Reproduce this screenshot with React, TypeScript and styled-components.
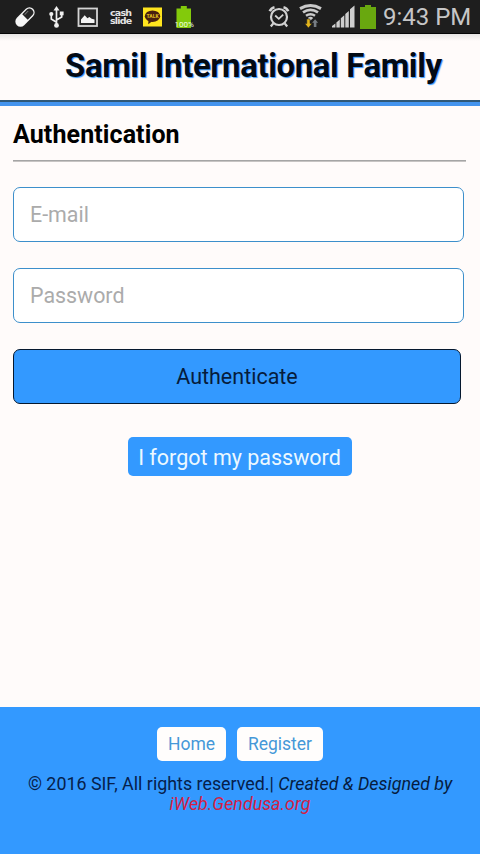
import React from "react";
import styled, { createGlobalStyle } from "styled-components";

const BLUE = "#3399ff";
const PAPER = "#fffbfa";

const GlobalStyle = createGlobalStyle`
  *, *::before, *::after { box-sizing: border-box; }
  html, body { margin: 0; padding: 0; }
  body { background: ${PAPER}; font-family: Roboto, sans-serif; color: #000; }
`;

const Screen = styled.div`
  display: flex;
  flex-direction: column;
  width: 480px;
  height: 854px;
  overflow: hidden;
  background: ${PAPER};
`;

const StatusBar = styled.div`
  display: flex;
  justify-content: space-between;
  flex: none;
  height: 34px;
  padding: 0 9px 0 14px;
  background: #1e1e1e;
  border-bottom: 1px solid #050505;
`;

const IconGroup = styled.div<{ $gap: number }>`
  display: flex;
  align-items: center;
  gap: ${(p) => p.$gap}px;
`;

const Glyph = styled.svg`
  display: block;
  flex: none;
`;

const CashSlide = styled.span`
  width: 21px;
  padding-top: 1px;
  font: 700 9.5px/8.5px "DejaVu Sans", sans-serif;
  letter-spacing: -0.8px;
  color: #e4e4e4;
`;

const Clock = styled.span`
  width: 88px;
  margin-left: 2px;
  font-size: 24px;
  line-height: 32px;
  letter-spacing: 0;
  white-space: nowrap;
  color: #c6c6c6;
`;

const Header = styled.header`
  flex: none;
  height: 72px;
  padding: 12px 0 0 65px;
  background: linear-gradient(#e6e4e3, ${PAPER} 7px);
  border-bottom: 4px solid #4494ee;
  box-shadow: inset 0 -2px 0 #2f5878;
`;

const Title = styled.h1`
  margin: 0;
  font-size: 33px;
  line-height: 40px;
  font-weight: 700;
  letter-spacing: -0.4px;
  white-space: nowrap;
  color: #030a14;
  text-shadow: 1px 1px 1px ${BLUE};
`;

const Main = styled.main`
  flex: 1;
  padding: 12px 14px 0 13px;
`;

const Heading = styled.h2`
  margin: 0 0 10px;
  height: 32px;
  font-size: 25px;
  line-height: 33px;
  font-weight: 700;
  letter-spacing: 0.1px;
`;

const Divider = styled.hr`
  margin: 0 0 25px;
  border: 0;
  border-top: 1px solid #a5a5a5;
  border-bottom: 1px solid #c7c4c3;
`;

const Form = styled.form`
  display: flex;
  flex-direction: column;
  gap: 26px;
`;

const Field = styled.input`
  width: 451px;
  height: 55px;
  padding: 0 15px 1px 16px;
  border: 1px solid #3d8fcb;
  border-radius: 7px;
  background: #fff;
  font: 400 21.4px Roboto, sans-serif;
  outline: none;
  &::placeholder { color: #ababab; opacity: 1; }
`;

const Submit = styled.button`
  width: 448px;
  height: 55px;
  padding: 0;
  border: 1px solid #06182e;
  border-radius: 7px;
  background: ${BLUE};
  color: #061c3c;
  font: 400 21.5px Roboto, sans-serif;
`;

const Centered = styled.div<{ $top: number; $gap?: number }>`
  display: flex;
  justify-content: center;
  gap: ${(p) => p.$gap ?? 0}px;
  padding-top: ${(p) => p.$top}px;
`;

const Forgot = styled.a`
  width: 224px;
  height: 39px;
  padding-top: 1px;
  border-radius: 5px;
  background: ${BLUE};
  color: #ecf8ff;
  font-size: 21.5px;
  line-height: 39px;
  text-align: center;
  white-space: nowrap;
`;

const Footer = styled.footer`
  flex: none;
  height: 147px;
  background: ${BLUE};
`;

const FooterLink = styled.a<{ $width: number }>`
  width: ${(p) => p.$width}px;
  height: 34px;
  border-radius: 5px;
  background: #fffdfc;
  color: #4598d8;
  font-size: 17.5px;
  line-height: 34px;
  text-align: center;
`;

const Legal = styled.p`
  margin: 13px 0 0;
  font-size: 17.85px;
  line-height: 20px;
  text-align: center;
  white-space: nowrap;
  color: #06204a;
`;

const Credit = styled.em`
  color: #061c40;
`;

const SiteLink = styled.em`
  color: #d41f45;
`;

const PillIcon = () => (
  <Glyph width="22" height="22" viewBox="0 0 22 22">
    <g transform="rotate(-45 11 11)">
      <rect x="-0.5" y="5.8" width="23" height="10.4" rx="5.2" fill="#f6f6f6" />
      <path d="M11 7.1h6.2a3.9 3.9 0 0 1 0 7.8H11z" fill="#242424" />
      <path d="M12.5 9h5" stroke="#777" strokeWidth="1" />
    </g>
  </Glyph>
);

const UsbIcon = () => (
  <Glyph width="17" height="22" viewBox="-0.5 0 17 22" fill="none" stroke="#f0f0f0" strokeWidth="1.7">
    <path d="M8 3v16M8 16.2L2.8 13V8.5M8 14l5.2-3V7.5" />
    <path d="M8 0l3 4.6H5z" fill="#f0f0f0" stroke="none" />
    <circle cx="8" cy="19.4" r="2.4" fill="#f0f0f0" stroke="none" />
    <circle cx="2.8" cy="8" r="2.1" fill="#f0f0f0" stroke="none" />
    <path d="M11.3 5.5h3.8v3.8h-3.8z" fill="#f0f0f0" stroke="none" />
  </Glyph>
);

const PictureIcon = () => (
  <Glyph width="21" height="20" viewBox="0 0 21 20">
    <rect x="1.5" y="1.5" width="18.5" height="17.5" fill="#292929" stroke="#d5d5d5" strokeWidth="1.8" />
    <path d="M4 16v-3.500l3.700-4.200 2.700 2.900 2-1.200 2.300 1.800 2.800.6V16z" fill="#f5f5f5" />
  </Glyph>
);

const TalkIcon = () => (
  <Glyph width="20" height="20" viewBox="0 0 20 20">
    <rect x="0" y="0.5" width="19" height="19" fill="#ffe51e" />
    <ellipse cx="9.5" cy="9.2" rx="7.7" ry="5.8" fill="#49200f" />
    <path d="M5.500 13l-.3 4.2L9.500 14z" fill="#49200f" />
    <text x="9.5" y="11.2" textAnchor="middle" fontFamily="Roboto, sans-serif" fontSize="5" fontWeight="900" fill="#d8b51c">TALK</text>
  </Glyph>
);

const ChargeIcon = () => (
  <Glyph width="20" height="22" viewBox="0 0 20 22">
    <path d="M5.800 0h6v2.500H16V22H1.500V2.500h4.300z" fill="#83ca0b" />
    <text x="9.200" y="20.500" textAnchor="middle" fontFamily="Roboto, sans-serif" fontSize="8" fontWeight="400" fill="#f4ffe2">100%</text>
  </Glyph>
);

const AlarmIcon = () => (
  <Glyph width="22" height="23" viewBox="0 0 22 23" fill="none" stroke="#d2d2d2">
    <circle cx="11" cy="12" r="8" strokeWidth="2.2" />
    <path d="M7.200 10.500l3.600 3.300 4.400-4.200" strokeWidth="1.800" />
    <path d="M1.800 6.300A6.500 6.500 0 0 1 6.500 2.200M20.200 6.300A6.500 6.500 0 0 0 15.500 2.200" strokeWidth="2.700" />
    <path d="M5.200 18.500l-2.400 3M16.800 18.500l2.400 3" strokeWidth="2.200" />
  </Glyph>
);

const WifiIcon = () => (
  <Glyph width="24" height="25" viewBox="0 0 24 25" fill="none" stroke="#cacaca">
    <path d="M1 4.600Q11.500-1.400 22 4.600" strokeWidth="3" />
    <path d="M4 8.300Q11.500 3.400 19 8.300" strokeWidth="2.800" />
    <path d="M7 11.700Q11.500 8.600 16 11.700" strokeWidth="2.500" />
    <path d="M8.800 14Q11.500 11.700 14.200 14L11.500 16.500z" fill="#cacaca" stroke="none" />
    <path d="M7.800 15h3.200v4.500h2L9.400 24 5.800 19.500h2z" fill="#e3b51c" stroke="#1e1e1e" strokeWidth=".5" />
    <path d="M14.800 23v-4.200h-1.700l3-3.600 3 3.600h-1.700V23z" fill="#777d83" stroke="none" />
  </Glyph>
);

const SignalIcon = () => (
  <Glyph width="23" height="23" viewBox="0 0 23 23">
    <path
      d="M0 22.500v-1.500l3.400-2.500v4zM4.400 22.500v-5l3.400-3v8zM8.800 22.500v-9.300l3.500-3v12.300zM13.300 22.500V9l3.500-3v16.500zM18 22.500V4.300L22.500 .5v22z"
      fill="#cecece"
    />
  </Glyph>
);

const BatteryIcon = () => (
  <Glyph width="16" height="24" viewBox="0 0 16 24">
    <path d="M5 0h6v2h5v22H0V2h5z" fill="#69a80f" />
  </Glyph>
);

export default function App() {
  return (
    <>
      <GlobalStyle />
      <Screen>
        <StatusBar>
          <IconGroup $gap={12}>
            <PillIcon />
            <UsbIcon />
            <PictureIcon />
            <CashSlide>cash slide</CashSlide>
            <TalkIcon />
            <ChargeIcon />
          </IconGroup>
          <IconGroup $gap={5}>
            <IconGroup $gap={9}>
              <AlarmIcon />
              <WifiIcon />
              <SignalIcon />
            </IconGroup>
            <BatteryIcon />
            <Clock>9:43 PM</Clock>
          </IconGroup>
        </StatusBar>
        <Header>
          <Title>Samil International Family</Title>
        </Header>
        <Main>
          <Heading>Authentication</Heading>
          <Divider />
          <Form>
            <Field type="email" placeholder="E-mail" />
            <Field type="password" placeholder="Password" />
            <Submit type="button">Authenticate</Submit>
          </Form>
          <Centered $top={33}>
            <Forgot>I forgot my password</Forgot>
          </Centered>
        </Main>
        <Footer>
          <Centered $top={20} $gap={11}>
            <FooterLink $width={69}>Home</FooterLink>
            <FooterLink $width={86}>Register</FooterLink>
          </Centered>
          <Legal>
            © 2016 SIF, All rights reserved.| <Credit>Created &amp; Designed by</Credit>
            <br />
            <SiteLink>iWeb.Gendusa.org</SiteLink>
          </Legal>
        </Footer>
      </Screen>
    </>
  );
}
